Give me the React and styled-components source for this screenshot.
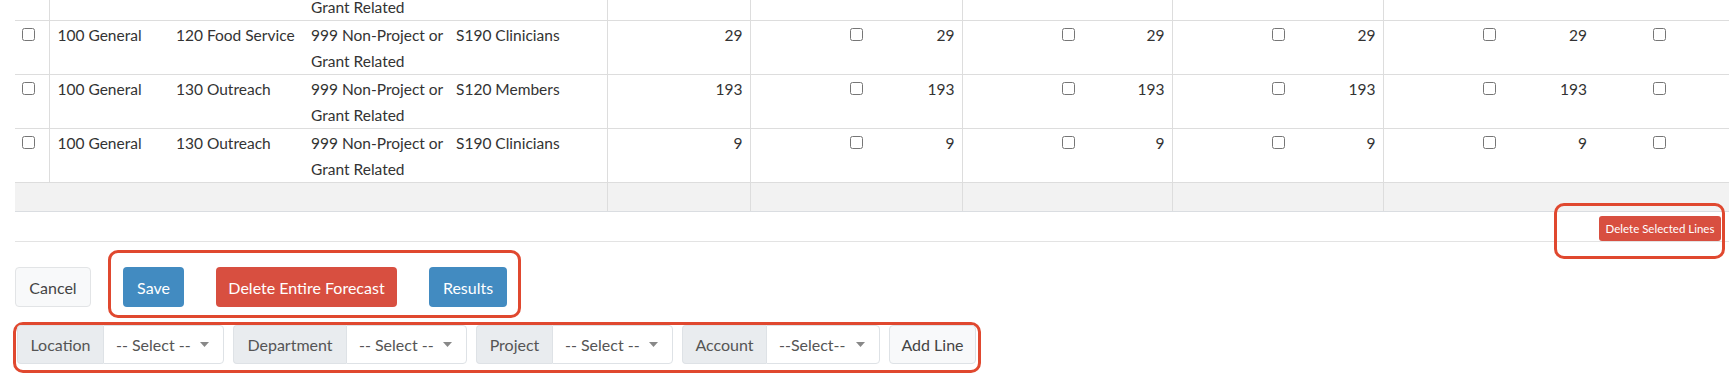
import React from 'react';
import styled, { createGlobalStyle } from 'styled-components';

const GlobalStyle = createGlobalStyle`
  html, body {
    margin: 0;
    padding: 0;
    background: #fff;
  }
  body {
    font-family: Lato, "Liberation Sans", sans-serif;
    font-size: 15.5px;
    color: #333;
  }
`;

const Page = styled.div`
  width: 1729px;
  height: 382px;
  overflow: hidden;
  padding-left: 15px;
  box-sizing: border-box;
`;

const TableViewport = styled.div`
  overflow: hidden;
`;

const Grid = styled.table`
  margin-top: -33px;
  width: 1714px;
  border-collapse: collapse;
  table-layout: fixed;
`;

const Col = styled.col`
  width: ${p => p.$w}px;
`;

const Cell = styled.td`
  padding: 1px ${p => p.$padR ?? 8}px 0 ${p => p.$padL ?? 8}px;
  height: 52px;
  vertical-align: top;
  line-height: 26px;
  text-align: ${p => p.$align || 'left'};
  border-bottom: 1px solid #ddd;
  border-left: ${p => (p.$divider ? '1px solid #ddd' : 'none')};
  white-space: nowrap;
  box-sizing: content-box;
`;

const CheckCell = styled(Cell)`
  padding-top: 7px;
  height: 46px;
`;

const Check = styled.input.attrs({ type: 'checkbox' })`
  display: block;
  margin: 0;
  width: 13px;
  height: 13px;
`;

const FootCell = styled.td`
  height: 28px;
  padding: 0;
  background: #f2f2f2;
  border-bottom: 1px solid #dadde1;
  border-left: ${p => (p.$divider ? '1px solid #ddd' : 'none')};
`;

const TableActions = styled.div`
  height: 29px;
  border-bottom: 1px solid #e3e3e3;
  display: flex;
  justify-content: flex-end;
  align-items: flex-end;
  padding-right: 8px;
`;

const Marked = styled.div`
  position: relative;
  display: flex;

  &::after {
    content: '';
    position: absolute;
    top: -13px;
    right: -4px;
    bottom: -18px;
    left: -45px;
    border: 3px solid #e0482f;
    border-radius: 10px;
    pointer-events: none;
  }
`;

const SmallDanger = styled.button`
  height: 25px;
  width: 122px;
  padding: 0;
  border: none;
  border-radius: 3px;
  background: #d84f40;
  color: #fff;
  font-family: inherit;
  font-size: 11.5px;
`;

const ButtonRow = styled.div`
  display: flex;
  align-items: flex-start;
  padding-top: 8px;
`;

const Button = styled.button`
  height: 40px;
  width: ${p => p.$w}px;
  padding: 0;
  border-radius: 4px;
  font-family: inherit;
  font-size: 16px;
  border: 1px solid ${p => (p.$tone === 'light' ? '#e2e4e6' : 'transparent')};
  background: ${p =>
    p.$tone === 'primary' ? '#428bc1' : p.$tone === 'danger' ? '#d84f40' : '#f8f9fa'};
  color: ${p => (p.$tone === 'light' ? '#444' : '#fff')};
`;

const CancelButton = styled(Button)`
  margin-top: 17px;
`;

const Highlight = styled.div`
  display: flex;
  align-items: flex-start;
  gap: ${p => p.$gap || 0}px;
  border: 3px solid #e0482f;
  border-radius: 10px;
`;

const ActionBox = styled(Highlight)`
  margin-left: 17px;
  padding: 14px 11px 8px 12px;
`;

const FilterBox = styled(Highlight)`
  margin-top: 4px;
  margin-left: -2px;
  width: fit-content;
  padding: 0 2px 6px 1px;
`;

const Group = styled.div`
  display: flex;
  height: 39px;
  box-sizing: border-box;
`;

const Addon = styled.div`
  width: ${p => p.$w}px;
  box-sizing: border-box;
  display: flex;
  align-items: center;
  justify-content: center;
  background: #e9ecef;
  border: 1px solid #dee2e6;
  border-right: none;
  border-radius: 4px 0 0 4px;
  color: #555;
  font-size: 16px;
`;

const Picker = styled.div`
  width: ${p => p.$w}px;
  box-sizing: border-box;
  display: flex;
  align-items: center;
  justify-content: space-between;
  padding: 0 14px 1px 12px;
  background: #fff;
  border: 1px solid #dee2e6;
  border-radius: 0 4px 4px 0;
  color: #555;
  font-size: 16px;
`;

const AddButton = styled.button`
  width: 87px;
  height: 39px;
  padding: 0;
  border: 1px solid #dee2e6;
  border-radius: 4px;
  background: #f8f9fa;
  color: #444;
  font-family: inherit;
  font-size: 16px;
`;

const Caret = () => (
  <svg width="9" height="5" viewBox="0 0 9 5">
    <path d="M0 0h9L4.5 5z" fill="#888" />
  </svg>
);

const widths = [34, 119, 135, 145, 159, 143, 130, 82, 128, 82, 130, 81, 130, 81, 135];

const rows = [
  { loc: '100 General', dept: '120 Food Service', acct: 'S120 Members', v: 193 },
  { loc: '100 General', dept: '120 Food Service', acct: 'S190 Clinicians', v: 29 },
  { loc: '100 General', dept: '130 Outreach', acct: 'S120 Members', v: 193 },
  { loc: '100 General', dept: '130 Outreach', acct: 'S190 Clinicians', v: 9 },
];

const filters = [
  { label: 'Location', lw: 86, sw: 121, text: '-- Select --' },
  { label: 'Department', lw: 113, sw: 121, text: '-- Select --' },
  { label: 'Project', lw: 76, sw: 121, text: '-- Select --' },
  { label: 'Account', lw: 84, sw: 114, text: '--Select--' },
];

const ForecastLine = ({ row }) => (
  <tr>
    <CheckCell $padL={7}><Check /></CheckCell>
    <Cell $divider>{row.loc}</Cell>
    <Cell>{row.dept}</Cell>
    <Cell>999 Non-Project or<br />Grant Related</Cell>
    <Cell>{row.acct}</Cell>
    <Cell $divider $align="right" $padR={7}>{row.v}</Cell>
    {[0, 1, 2, 3].map(i => (
      <React.Fragment key={i}>
        <CheckCell $divider $padL={99} $padR={0}><Check /></CheckCell>
        <Cell $align="right" $padL={0} $padR={7}>{row.v}</Cell>
      </React.Fragment>
    ))}
    <CheckCell $padL={59} $padR={0}><Check /></CheckCell>
  </tr>
);

export default function App() {
  return (
    <Page>
      <GlobalStyle />
      <TableViewport>
        <Grid>
          <colgroup>
            {widths.map((w, i) => <Col key={i} $w={w} />)}
          </colgroup>
          <tbody>
            {rows.map((row, i) => <ForecastLine key={i} row={row} />)}
            <tr>
              <FootCell colSpan={5} />
              <FootCell $divider />
              <FootCell $divider colSpan={2} />
              <FootCell $divider colSpan={2} />
              <FootCell $divider colSpan={2} />
              <FootCell $divider colSpan={2} />
              <FootCell />
            </tr>
          </tbody>
        </Grid>
      </TableViewport>

      <TableActions>
        <Marked>
          <SmallDanger>Delete Selected Lines</SmallDanger>
        </Marked>
      </TableActions>

      <ButtonRow>
        <CancelButton $tone="light" $w={76}>Cancel</CancelButton>
        <ActionBox $gap={32}>
          <Button $tone="primary" $w={61}>Save</Button>
          <Button $tone="danger" $w={181}>Delete Entire Forecast</Button>
          <Button $tone="primary" $w={78}>Results</Button>
        </ActionBox>
      </ButtonRow>

      <FilterBox $gap={9}>
        {filters.map(f => (
          <Group key={f.label}>
            <Addon $w={f.lw}>{f.label}</Addon>
            <Picker $w={f.sw}>
              <span>{f.text}</span>
              <Caret />
            </Picker>
          </Group>
        ))}
        <AddButton>Add Line</AddButton>
      </FilterBox>
    </Page>
  );
}
